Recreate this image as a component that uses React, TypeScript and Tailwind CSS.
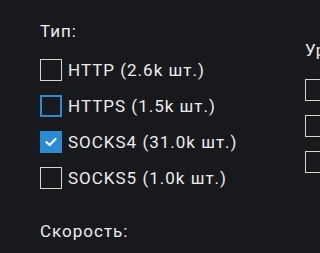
import React from 'react'

type Opt = { label: string; state: 'off' | 'focus' | 'on' }

const types: Opt[] = [
  { label: 'HTTP (2.6k шт.)', state: 'off' },
  { label: 'HTTPS (1.5k шт.)', state: 'focus' },
  { label: 'SOCKS4 (31.0k шт.)', state: 'on' },
  { label: 'SOCKS5 (1.0k шт.)', state: 'off' },
]

const Box = ({ state }: { state: Opt['state'] }) => {
  if (state === 'on') {
    return (
      <div className="w-[22px] h-[22px] shrink-0 bg-[#2b8bd0] flex items-center justify-center">
        <svg width="12" height="10" viewBox="0 0 12 10">
          <path d="M1.5 5.2 L4.6 8 L10.5 2" fill="none" stroke="#fff" strokeWidth="2.2" strokeLinecap="round" strokeLinejoin="round" />
        </svg>
      </div>
    )
  }
  if (state === 'focus') {
    return <div className="w-[22px] h-[22px] shrink-0 border-2 border-[#2b8bd0]" />
  }
  return <div className="w-[22px] h-[22px] shrink-0 border border-[#d8d4ce]" />
}

const Row = ({ opt }: { opt: Opt }) => (
  <div className="flex items-center gap-[6px] h-[22px]">
    <Box state={opt.state} />
    <span className="leading-[22px] whitespace-nowrap">{opt.label}</span>
  </div>
)

export default function App() {
  return (
    <div className="w-[320px] h-[253px] overflow-hidden bg-[#18191d] text-[#ececec] text-[17px] tracking-[1px] font-['Roboto',sans-serif]">
      <div className="flex pl-10 pt-[21px]">
        {/* Type filter */}
        <div className="w-[265px] shrink-0">
          <div className="leading-[20px]">Тип:</div>
          <div className="flex flex-col gap-[14px] mt-[18px]">
            {types.map((t) => (
              <Row key={t.label} opt={t} />
            ))}
          </div>
        </div>

        {/* Level filter (cut off at the window edge) */}
        <div className="shrink-0 mt-[19px]">
          <div className="leading-[20px] whitespace-nowrap">Уровень анонимности:</div>
          <div className="flex flex-col gap-[14px] mt-[19px]">
            <Row opt={{ label: 'Высокий', state: 'off' }} />
            <Row opt={{ label: 'Средний', state: 'off' }} />
            <Row opt={{ label: 'Прозрачный', state: 'off' }} />
          </div>
        </div>
      </div>

      <div className="pl-10 mt-[32px] leading-[20px]">Скорость:</div>
    </div>
  )
}
